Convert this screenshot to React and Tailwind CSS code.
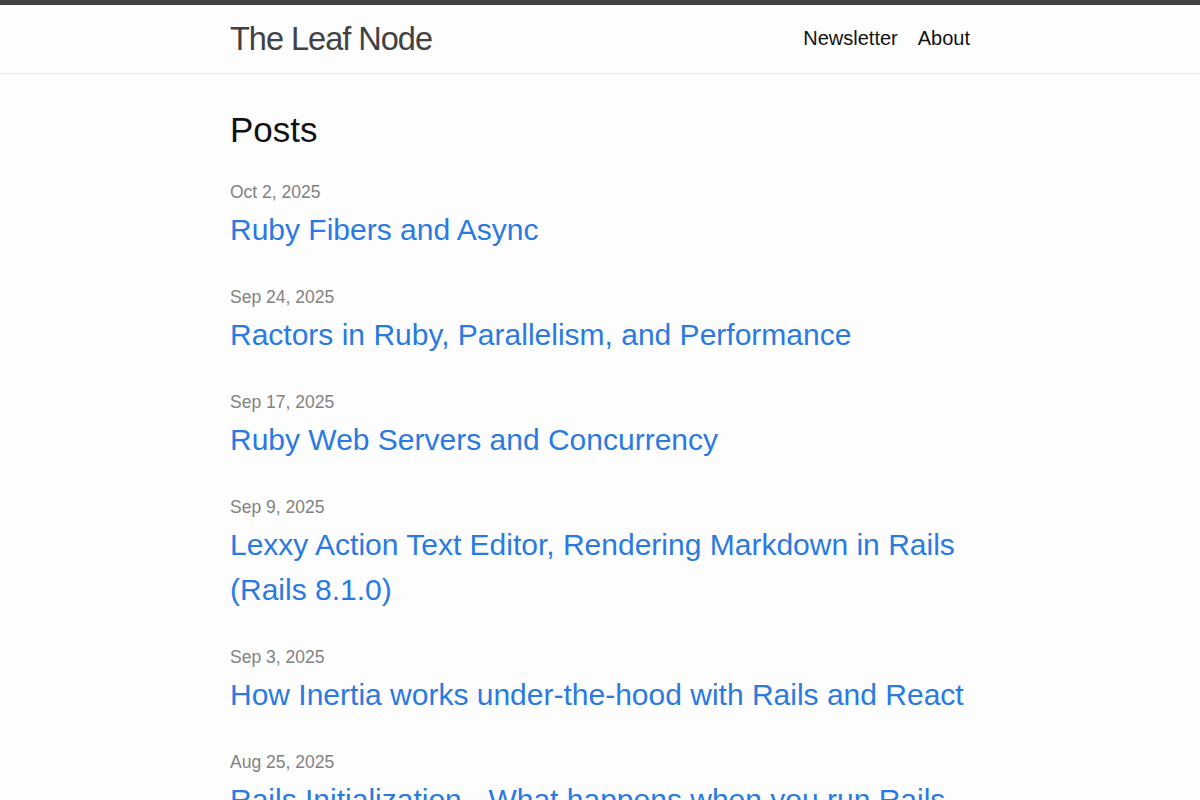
import React from 'react'

const posts = [
  { date: 'Oct 2, 2025', title: 'Ruby Fibers and Async' },
  { date: 'Sep 24, 2025', title: 'Ractors in Ruby, Parallelism, and Performance' },
  { date: 'Sep 17, 2025', title: 'Ruby Web Servers and Concurrency' },
  { date: 'Sep 9, 2025', title: 'Lexxy Action Text Editor, Rendering Markdown in Rails (Rails 8.1.0)' },
  { date: 'Sep 3, 2025', title: 'How Inertia works under-the-hood with Rails and React' },
  { date: 'Aug 25, 2025', title: 'Rails Initialization - What happens when you run Rails server' },
]

const App = () => {
  return (
    <div className="min-h-screen bg-[#fdfdfd] text-[#111] font-['Liberation_Sans',Arial,sans-serif]">
      <div className="h-[5px] bg-[#424242]" />
      <header className="border-b border-[#e8e8e8]">
        <div className="max-w-[740px] mx-auto h-[68px] flex items-center justify-between">
          <a href="#" className="text-[32.5px] font-light tracking-[-1px] text-[#424242]">The Leaf Node</a>
          <nav className="flex gap-5 text-[20px] text-[#111] -mt-[2px]">
            <a href="#">Newsletter</a>
            <a href="#">About</a>
          </nav>
        </div>
      </header>
      <main className="max-w-[740px] mx-auto pt-[30px]">
        <h2 className="text-[35px] leading-[52px] mb-[22px]">Posts</h2>
        <ul>
          {posts.map(p => (
            <li key={p.title} className="mb-[31px]">
              <div className="text-[17.5px] leading-[28px] text-[#828282]">{p.date}</div>
              <h3 className="text-[30px] leading-[45px] pt-[1px]">
                <a href="#" className="text-[#2a7ae2]">{p.title}</a>
              </h3>
            </li>
          ))}
        </ul>
      </main>
    </div>
  )
}

export default App
